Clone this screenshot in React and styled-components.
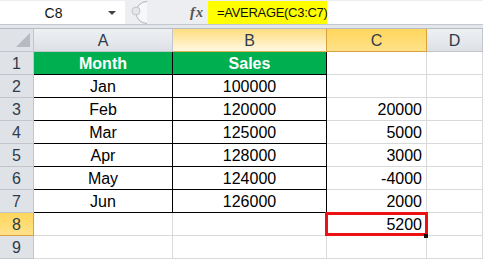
import React from "react";
import styled, { createGlobalStyle, css } from "styled-components";

const GlobalStyle = createGlobalStyle`
  html, body {
    margin: 0;
    padding: 0;
    background: #ffffff;
    overflow: hidden;
    font-family: "Liberation Sans", Arial, sans-serif;
  }
`;

const columns = ["A", "B", "C", "D"];
const rows = [
  { month: "Month", sales: "Sales", diff: "", head: true },
  { month: "Jan", sales: "100000", diff: "" },
  { month: "Feb", sales: "120000", diff: "20000" },
  { month: "Mar", sales: "125000", diff: "5000" },
  { month: "Apr", sales: "128000", diff: "3000" },
  { month: "May", sales: "124000", diff: "-4000" },
  { month: "Jun", sales: "126000", diff: "2000" },
  { month: "", sales: "", diff: "5200", selected: true, plain: true },
  { month: "", sales: "", diff: "", plain: true },
];

export default function App() {
  return (
    <Page>
      <GlobalStyle />
      <FormulaBar>
        <NameBox>
          <span>C8</span>
          <Caret />
        </NameBox>
        <Splitter width="22" height="23" viewBox="0 0 22 23">
          <path d="M22 0.5 A11 11 0 0 0 22 22.5" fill="#f6f7f8" stroke="#aeb2b8" />
          <circle cx="11" cy="10" r="4" fill="#e4e6e9" stroke="#c2c5ca" />
        </Splitter>
        <Fx>
          <i>f</i>x
        </Fx>
        <Input>
          <Highlight>=AVERAGE(C3:C7)</Highlight>
        </Input>
      </FormulaBar>
      <Strip />
      <Grid>
        <Corner>
          <svg width="20" height="18" viewBox="0 0 20 18">
            <polygon points="18,2 18,16 4,16" fill="#b7bbc1" />
          </svg>
        </Corner>
        {columns.map((c) => (
          <ColHead key={c} $state={c === "C" ? "active" : c === "B" ? "soft" : ""}>
            {c}
          </ColHead>
        ))}
        {rows.map((r, i) => (
          <React.Fragment key={i}>
            <RowHead $active={r.selected}>{i + 1}</RowHead>
            <Cell $table={!r.plain} $green={r.head}>{r.month}</Cell>
            <Cell $table={!r.plain} $green={r.head}>{r.sales}</Cell>
            <Cell $right $selected={r.selected}>
              {r.diff}
              {r.selected && <Handle />}
            </Cell>
            <Cell />
          </React.Fragment>
        ))}
      </Grid>
    </Page>
  );
}

const Page = styled.div`
  width: 483px;
  height: 259px;
  overflow: hidden;
  background: #fff;
`;

const FormulaBar = styled.div`
  display: flex;
  align-items: stretch;
  height: 25px;
  background: #eceef1;
  border-bottom: 1px solid #c4c8ce;
  box-sizing: border-box;
  padding-top: 1px;
`;

const NameBox = styled.div`
  position: relative;
  width: 125px;
  height: 23px;
  background: #fff;
  display: flex;
  align-items: center;
  justify-content: center;
  font-size: 14px;
  color: #111;
  span {
    margin-left: -18px;
  }
`;

const Caret = styled.div`
  position: absolute;
  right: 9px;
  top: 10px;
  border-left: 4px solid transparent;
  border-right: 4px solid transparent;
  border-top: 4px solid #444;
`;

const Splitter = styled.svg`
  display: block;
  flex: none;
`;

const Fx = styled.div`
  width: 61px;
  display: flex;
  align-items: center;
  justify-content: flex-end;
  padding-right: 5px;
  box-sizing: border-box;
  font-family: "Liberation Serif", "Times New Roman", serif;
  font-size: 14px;
  font-weight: bold;
  font-style: italic;
  color: #555;
  i {
    font-size: 15px;
    margin-right: 1px;
  }
`;

const Input = styled.div`
  flex: 1;
  height: 23px;
  background: #fff;
  display: flex;
`;

const Highlight = styled.div`
  width: 119px;
  background: #ffff00;
  display: flex;
  align-items: center;
  padding-left: 9px;
  box-sizing: border-box;
  font-size: 13px;
  letter-spacing: -0.3px;
  color: #111;
`;

const Strip = styled.div`
  height: 4px;
  background: #e3e6ea;
  border-bottom: 1px solid #b9bdc3;
  box-sizing: border-box;
`;

const Grid = styled.div`
  display: grid;
  grid-template-columns: 34px 139px 154px 100px 56px;
  grid-auto-rows: 23px;
`;

const headBase = css`
  box-sizing: border-box;
  display: flex;
  align-items: center;
  justify-content: center;
  font-size: 16px;
  color: #2f3b4a;
  padding-top: 1px;
`;

const Corner = styled.div`
  ${headBase};
  background: #dfe3e8;
  border-right: 1px solid #c2c6cc;
  border-bottom: 1px solid #c2c6cc;
  justify-content: flex-end;
  align-items: flex-end;
  padding: 0 1px 2px 0;
`;

const ColHead = styled.div`
  ${headBase};
  background: linear-gradient(#eef0f3, #dde1e6);
  border-right: 1px solid #c2c6cc;
  border-bottom: 1px solid #c2c6cc;
  ${(p) =>
    p.$state === "active" &&
    css`
      background: linear-gradient(#ffd65c, #ffe28a);
      border-right-color: #d9a13a;
      border-bottom-color: #d9a13a;
    `}
  ${(p) =>
    p.$state === "soft" &&
    css`
      background: linear-gradient(#fedd7e, #fff8e2);
      border-right-color: #d9a13a;
      border-bottom-color: #e4b24a;
    `}
`;

const RowHead = styled.div`
  ${headBase};
  background: #dfe3e8;
  border-right: 1px solid #c2c6cc;
  border-bottom: 1px solid #c2c6cc;
  ${(p) =>
    p.$active &&
    css`
      background: linear-gradient(#ffd65c, #ffe28a);
      border-bottom-color: #d9a13a;
      border-right-color: #d9a13a;
    `}
`;

const Cell = styled.div`
  position: relative;
  box-sizing: border-box;
  display: flex;
  align-items: center;
  justify-content: ${(p) => (p.$right ? "flex-end" : "center")};
  padding: 2px ${(p) => (p.$right ? "4px" : "0")} 0 0;
  font-size: 16px;
  color: #000;
  border-right: 1px solid #d9d9d9;
  border-bottom: 1px solid #d9d9d9;
  ${(p) =>
    p.$table &&
    css`
      border-right-color: #000;
      border-bottom-color: #000;
    `}
  ${(p) =>
    p.$green &&
    css`
      background: #00b050;
      color: #fff;
      font-weight: bold;
    `}
  ${(p) =>
    p.$selected &&
    css`
      &::after {
        content: "";
        position: absolute;
        left: -2px;
        right: -2px;
        top: -1px;
        bottom: -1px;
        border: 3px solid #ee1111;
        pointer-events: none;
      }
    `}
`;

const Handle = styled.div`
  position: absolute;
  right: -2px;
  bottom: -3px;
  width: 4px;
  height: 4px;
  background: #111;
  z-index: 1;
`;
